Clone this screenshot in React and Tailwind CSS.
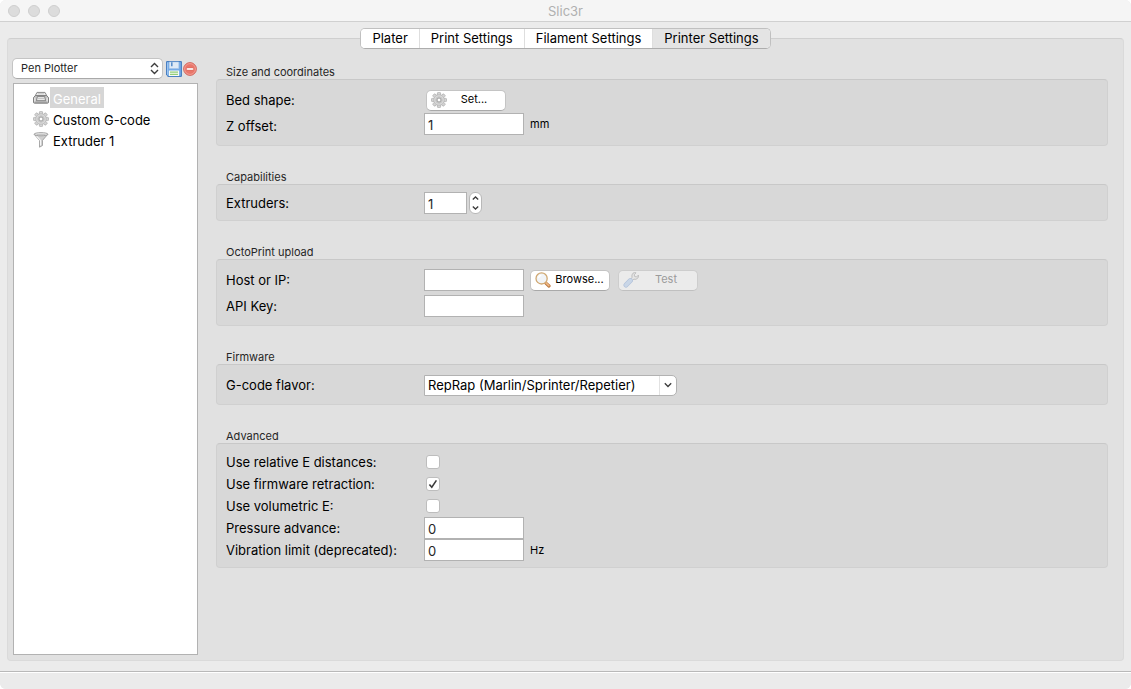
import React, { useState } from 'react';

const TABS = ['Plater', 'Print Settings', 'Filament Settings', 'Printer Settings'];

const inputClass =
  'h-[22px] border border-[#b2b2b2] bg-white px-[3px] pt-0.5 text-[13px] leading-4 text-[#262626] outline-none';
const buttonClass =
  'flex h-[21px] w-20 items-center rounded-[5px] border border-[#c4c4c4] border-b-[#a9a9a9] bg-white pb-px pl-1 text-[11px] text-black';

const GearIcon = () => (
  <svg width="16" height="16" viewBox="0 0 16 16" className="shrink-0">
    <g fill="#d4d4d4" stroke="#a0a0a0" strokeWidth="0.6">
      {[0, 45, 90, 135, 180, 225, 270, 315].map(angle => (
        <rect key={angle} x="6.4" y="0.4" width="3.2" height="4" rx="0.8" transform={`rotate(${angle} 8 8)`} />
      ))}
    </g>
    <circle cx="8" cy="8" r="5.3" fill="#d9d9d9" stroke="#b0b0b0" strokeWidth="0.6" />
    <circle cx="8" cy="8" r="3.2" fill="none" stroke="#c2c2c2" strokeWidth="1" />
    <circle cx="8" cy="8" r="2" fill="#fff" stroke="#949494" strokeWidth="0.9" />
  </svg>
);

const PrinterIcon = () => (
  <svg width="16" height="16" viewBox="0 0 16 16" className="shrink-0">
    <path d="M4 2.4h8l2 3.8H2z" fill="#f2f2f2" stroke="#8a8a8a" strokeWidth="1" />
    <path d="M4.6 3.8h6.8" stroke="#b5b5b5" strokeWidth="0.8" />
    <path d="M2.4 5.6h11.2l1.9 2v4.6q0 1-1 1h-13q-1 0-1-1V7.600z" fill="#c9c9c9" stroke="#747474" strokeWidth="0.9" />
    <path d="M4.4 6.400h7.2l1 4.300H3.400z" fill="#e9e9e9" stroke="#7a7a7a" strokeWidth="0.9" />
    <path d="M4.600 8.400h6.800" stroke="#b8b8b8" strokeWidth="0.8" />
    <path d="M1.800 8v3.600M14.200 8v3.600" stroke="#efefef" strokeWidth="0.9" />
    <path d="M1.600 12.200h12.800" stroke="#8b8b8b" strokeWidth="0.8" />
  </svg>
);

const FunnelIcon = () => (
  <svg width="16" height="16" viewBox="0 0 16 16" className="shrink-0">
    <path d="M1.200 2.300 6.500 8.400v6.800l3-1.700V8.400l5.300-6.100z" fill="#cfcfcf" stroke="#969696" strokeWidth="0.8" />
    <path d="M3.600 4.200 7.500 8.400v5.200" fill="none" stroke="#f6f6f6" strokeWidth="1.100" />
    <ellipse cx="8" cy="2.200" rx="6.900" ry="1.600" fill="#e9e9e9" stroke="#969696" strokeWidth="0.8" />
    <ellipse cx="8" cy="2.400" rx="4.800" ry="0.700" fill="#c6c6c6" />
  </svg>
);

const SaveIcon = () => (
  <svg width="16" height="16" viewBox="0 0 16 16">
    <path d="M.6.6h14.800v14.800H2L.6 14z" fill="#73a9e6" stroke="#3f78bd" strokeWidth="1" />
    <path d="M1.600 1.400v12.200" stroke="#a5cdf5" strokeWidth="0.9" />
    <path d="M3.200 1h9.600v6.600H3.200z" fill="#dfeaf6" stroke="#a4c4e6" strokeWidth="0.5" />
    <path d="M5 1.200h1.600v4H5z" fill="#5b8fcb" />
    <path d="M2.900 9.400h10.200v5.500H2.900z" fill="#f7fbf4" />
    <path d="M4 11.100h8M4 13.300h8" stroke="#92ce78" strokeWidth="1.200" />
  </svg>
);

const DeleteIcon = () => (
  <svg width="14" height="14" viewBox="0 0 14 14">
    <circle cx="7" cy="7" r="6.400" fill="#e9766a" stroke="#cf6259" strokeWidth="0.9" />
    <circle cx="7" cy="7" r="5.400" fill="none" stroke="#f4a79e" strokeWidth="0.8" />
    <rect x="3.600" y="5.900" width="6.800" height="2.200" rx="0.400" fill="#fff" stroke="#d25b4c" strokeWidth="0.400" />
  </svg>
);

const SearchIcon = () => (
  <svg width="16" height="16" viewBox="0 0 16 16" className="shrink-0">
    <path d="m10.600 10.800 3.400 3.200" stroke="#b8763f" strokeWidth="3.200" strokeLinecap="round" />
    <path d="m10.700 10.700 3.100 2.900" stroke="#f0b884" strokeWidth="1.600" strokeLinecap="round" />
    <circle cx="6.600" cy="6.400" r="5.600" fill="#f1f4f7" stroke="#d0a872" strokeWidth="1.300" />
    <path d="M3.600 6.200a3 3 0 0 1 2.800-2.800" fill="none" stroke="#fff" strokeWidth="1.200" />
  </svg>
);

const WrenchIcon = () => (
  <svg width="16" height="16" viewBox="0 0 16 16" className="shrink-0">
    <path
      d="M7.600 7 9 5.400Q8.400 2.600 10 1.200 11.400.2 13 .8L11.200 2.800l.5 1.700 1.800.5 1.900-1.900q.4 2-.8 3.200-1.500 1.500-3.800.9L9.400 8.600z"
      fill="#f4f4f4"
      stroke="#9c9c9c"
      strokeWidth="0.9"
    />
    <path d="m3 13 4.400-4.400" stroke="#8eaedd" strokeWidth="5" strokeLinecap="round" />
    <path d="m3 13 4.400-4.400" stroke="#bcd6f7" strokeWidth="3.600" strokeLinecap="round" />
  </svg>
);

const Section = ({ title, children }) => (
  <section>
    <h2 className="h-[15px] pl-2.5 text-[11px] leading-4 text-[#262626]">{title}</h2>
    <div className="rounded-[4px] border border-[#d0d0d0] border-t-[#c8c8c8] bg-[#d8d8d8] px-[9px] pt-[7px] pb-1.5">
      {children}
    </div>
  </section>
);

const Row = ({ label, htmlFor, height = 'h-[26px]', align = '', children }) => (
  <div className={`flex items-center ${height}`}>
    <label htmlFor={htmlFor} className="w-[198px] shrink-0 text-[13px] leading-4 text-black">
      {label}
    </label>
    <div className={`flex items-center ${align}`}>{children}</div>
  </div>
);

const Checkbox = ({ id, checked, onChange }) => (
  <span className="relative ml-0.5 flex">
    <input
      id={id}
      type="checkbox"
      checked={checked}
      onChange={onChange}
      className="size-3.5 appearance-none rounded-[3px] border border-[#bdbdbd] bg-white"
    />
    {checked && (
      <svg width="14" height="14" viewBox="0 0 14 14" className="pointer-events-none absolute inset-0">
        <path d="M3.400 7.400 5.800 10.200 10.400 3.400" fill="none" stroke="#3c3c3c" strokeWidth="1.600" />
      </svg>
    )}
  </span>
);

const TREE = [
  { name: 'General', Icon: PrinterIcon },
  { name: 'Custom G-code', Icon: GearIcon },
  { name: 'Extruder 1', Icon: FunnelIcon },
];

const App = () => {
  const [activeTab, setActiveTab] = useState('Printer Settings');
  const [page, setPage] = useState('General');
  const [extruders, setExtruders] = useState(1);
  const [settings, setSettings] = useState({
    relativeE: false,
    firmwareRetraction: true,
    volumetricE: false,
  });

  const toggle = (name) => {
    setSettings(prev => ({ ...prev, [name]: !prev[name] }));
  };

  return (
    <div className="flex min-h-screen flex-col overflow-hidden rounded-[6px] bg-[#ebebeb] font-['Inter','Liberation_Sans',sans-serif]">
      <header className="relative flex h-[22px] items-center justify-center border-b border-[#d0d0d0] bg-[#f5f5f5]">
        <div className="absolute left-2 flex gap-2">
          <span className="size-3 rounded-full border border-[#cecece] bg-[#dcdcdc]" />
          <span className="size-3 rounded-full border border-[#cecece] bg-[#dcdcdc]" />
          <span className="size-3 rounded-full border border-[#cecece] bg-[#dcdcdc]" />
        </div>
        <h1 className="text-[13px] leading-4 text-[#b0b0b0]">Slic3r</h1>
      </header>

      <nav className="z-10 mt-1.5 flex justify-center">
        <div className="flex h-[21px] overflow-hidden rounded-[5px] border border-[#c0c0c0] border-b-[#adadad] bg-white">
          {TABS.map(tab => (
            <button
              key={tab}
              type="button"
              onClick={() => setActiveTab(tab)}
              className={`border-l border-[#dedede] px-[11px] pb-0.5 text-[13px] leading-4 text-black first:border-l-0 ${
                tab === activeTab ? 'bg-[#e4e4e4]' : 'bg-white'
              }`}
            >
              {tab}
            </button>
          ))}
        </div>
      </nav>

      <main className="mx-[7px] -mt-[11px] mb-2.5 flex flex-1 gap-[18px] rounded-[4px] border border-[#dadada] border-t-[#cfcfcf] bg-[#e1e1e1] pr-[15px] pb-[5px] pl-1">
        <aside className="flex w-[186px] shrink-0 flex-col pt-[19px]">
          <div className="flex items-center">
            <div className="relative flex-none">
              <select
                aria-label="Printer preset"
                className="block h-[21px] w-[151px] appearance-none rounded-[5px] border border-[#c4c4c4] border-b-[#a9a9a9] bg-white pl-2 text-[11px] text-[#262626]"
              >
                <option>Pen Plotter</option>
              </select>
              <svg width="9" height="13" viewBox="0 0 9 13" className="pointer-events-none absolute top-1 right-1">
                <path d="M1 5 4.500 1.500 8 5M1 8l3.500 3.500L8 8" fill="none" stroke="#3c3c3c" strokeWidth="1.400" />
              </svg>
            </div>
            <button type="button" aria-label="Save preset" className="ml-[3px]">
              <SaveIcon />
            </button>
            <button type="button" aria-label="Delete preset" className="ml-px">
              <DeleteIcon />
            </button>
          </div>
          <ul className="mt-1 ml-px flex-1 border border-[#b2b2b2] bg-white pt-[3px] pl-[19px]">
            {TREE.map(({ name, Icon }) => (
              <li key={name}>
                <button type="button" onClick={() => setPage(name)} className="flex h-[21px] items-center gap-px">
                  <Icon />
                  <span
                    className={`h-[21px] px-[3px] pt-1 text-[13px] leading-4 ${
                      page === name ? 'bg-[#d6d6d6] text-white' : 'text-black'
                    }`}
                  >
                    {name}
                  </span>
                </button>
              </li>
            ))}
          </ul>
        </aside>

        <form className="flex flex-1 flex-col gap-[23px] pt-[25px]" onSubmit={e => e.preventDefault()}>
          <Section title="Size and coordinates">
            <Row label="Bed shape:" htmlFor="bed-shape">
              <button id="bed-shape" type="button" className={`${buttonClass} ml-0.5`}>
                <GearIcon />
                <span className="flex-1 pr-1 text-center">Set...</span>
              </button>
            </Row>
            <Row label="Z offset:" htmlFor="z-offset" align="self-start">
              <input id="z-offset" type="text" defaultValue="1" className={`${inputClass} w-[100px]`} />
              <span className="ml-1.5 text-[11px] text-black">mm</span>
            </Row>
          </Section>

          <Section title="Capabilities">
            <Row label="Extruders:" htmlFor="extruders" height="h-[22px]">
              <input
                id="extruders"
                type="text"
                value={extruders}
                onChange={e => setExtruders(e.target.value)}
                className={`${inputClass} w-[43px]`}
              />
              <div className="ml-0.5 flex h-[22px] w-[13px] flex-col overflow-hidden rounded-[6px] border border-[#b8b8b8] bg-white">
                <button
                  type="button"
                  aria-label="More extruders"
                  className="flex flex-1 items-center justify-center"
                  onClick={() => setExtruders(Number(extruders) + 1)}
                >
                  <svg width="7" height="4" viewBox="0 0 7 4">
                    <path d="M.8 3.500 3.500 1l2.700 2.500" fill="none" stroke="#3c3c3c" strokeWidth="1.300" />
                  </svg>
                </button>
                <button
                  type="button"
                  aria-label="Fewer extruders"
                  className="flex flex-1 items-center justify-center"
                  onClick={() => setExtruders(Math.max(1, Number(extruders) - 1))}
                >
                  <svg width="7" height="4" viewBox="0 0 7 4">
                    <path d="M.8.5 3.500 3 6.200.5" fill="none" stroke="#3c3c3c" strokeWidth="1.300" />
                  </svg>
                </button>
              </div>
            </Row>
          </Section>

          <Section title="OctoPrint upload">
            <Row label="Host or IP:" htmlFor="host">
              <input id="host" type="text" className={`${inputClass} w-[100px]`} />
              <button type="button" className={`${buttonClass} ml-1.5`}>
                <SearchIcon />
                <span className="flex-1 pr-px text-center">Browse...</span>
              </button>
              <button type="button" disabled className={`${buttonClass} ml-2 opacity-50`}>
                <WrenchIcon />
                <span className="flex-1 pr-1 text-center text-[#606060]">Test</span>
              </button>
            </Row>
            <Row label="API Key:" htmlFor="api-key">
              <input id="api-key" type="text" className={`${inputClass} w-[100px]`} />
            </Row>
          </Section>

          <Section title="Firmware">
            <Row label="G-code flavor:" htmlFor="flavor">
              <div className="relative">
                <select
                  id="flavor"
                  className="block h-[21px] w-[253px] appearance-none rounded-r-[5px] border border-[#b2b2b2] bg-white pl-[3px] text-[13px] leading-4 text-black"
                >
                  <option>RepRap (Marlin/Sprinter/Repetier)</option>
                </select>
                <span className="pointer-events-none absolute inset-y-px right-px flex w-[17px] items-center justify-center border-l border-[#e2e2e2]">
                  <svg width="8" height="6" viewBox="0 0 8 6">
                    <path d="M.8 1.200 4 4.500l3.200-3.300" fill="none" stroke="#3c3c3c" strokeWidth="1.300" />
                  </svg>
                </span>
              </div>
            </Row>
          </Section>

          <Section title="Advanced">
            <Row label="Use relative E distances:" htmlFor="relative-e" height="h-[22px]">
              <Checkbox id="relative-e" checked={settings.relativeE} onChange={() => toggle('relativeE')} />
            </Row>
            <Row label="Use firmware retraction:" htmlFor="fw-retraction" height="h-[22px]">
              <Checkbox
                id="fw-retraction"
                checked={settings.firmwareRetraction}
                onChange={() => toggle('firmwareRetraction')}
              />
            </Row>
            <Row label="Use volumetric E:" htmlFor="volumetric-e" height="h-[22px]">
              <Checkbox id="volumetric-e" checked={settings.volumetricE} onChange={() => toggle('volumetricE')} />
            </Row>
            <Row label="Pressure advance:" htmlFor="pressure" height="h-[22px]">
              <input id="pressure" type="text" defaultValue="0" className={`${inputClass} w-[100px]`} />
            </Row>
            <Row label="Vibration limit (deprecated):" htmlFor="vibration" height="h-[22px]">
              <input id="vibration" type="text" defaultValue="0" className={`${inputClass} w-[100px]`} />
              <span className="ml-1.5 text-[11px] text-black">Hz</span>
            </Row>
          </Section>
        </form>
      </main>

      <footer className="h-[18px] border-t border-[#b9b9b9] bg-[#ebebeb] shadow-[inset_0_1px_0_#ffffff]" />
    </div>
  );
};

export default App;
